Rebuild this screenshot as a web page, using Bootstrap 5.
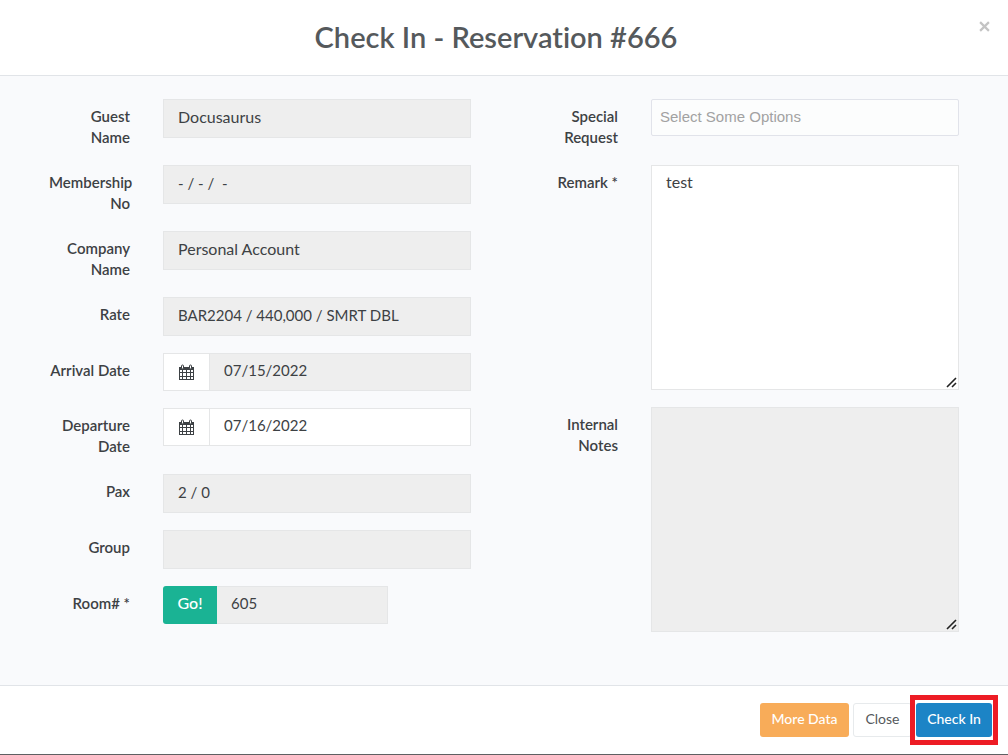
<!DOCTYPE html>
<html lang="en">
<head>
<meta charset="utf-8">
<meta name="viewport" content="width=device-width, initial-scale=1">
<title>Check In - Reservation #666</title>
<link href="https://cdn.jsdelivr.net/npm/bootstrap@5.3.0/dist/css/bootstrap.min.css" rel="stylesheet">
<style>
  body { font-family: Lato, "Liberation Sans", sans-serif; font-variant-ligatures: none; color: #3d4144; background: #fff; }
  .dialog { border-bottom: 1px solid #5f6062; }
  .dialog-head { height: 76px; padding: 0 32px 2px 16px; border-bottom: 1px solid #e1e4e8; }
  .dialog-head h1 { font-size: 29px; line-height: 36px; font-weight: 600; color: #55595c; }
  .dismiss { top: 14px; right: 16px; width: 15px; height: 24px; color: #c4c4c4; line-height: 1; }
  .dialog-main { background: #f9fafc; padding: 23px 16px 36px; }
  .field { display: grid; grid-template-columns: 81px minmax(0, 1fr); column-gap: 33px; padding: 0 33px; margin-bottom: 17px; }
  .field > label { padding-top: 7px; font-size: 15px; line-height: 21px; font-weight: 600; text-align: right; }
  .form-control, .input-group-text { border: 1px solid #e5e6e7; border-radius: 0; }
  .form-control { height: 39px; padding: 3px 14px 7px; font-size: 16px; line-height: 24px; color: #3d4144; }
  .input-group .form-control { height: 38px; }
  .form-control.numeric { font-size: 15px; }
  .form-control[readonly] { background: #eee; }
  .input-group-text { width: 47px; background: #fff; color: #3d4144; }
  .room-group { width: 225px; }
  .btn-go { width: 54px; padding: 0 0 4px; border: 0; border-radius: 3px 0 0 3px; background: #1ab394; color: #fff; font-size: 16px; font-weight: 500; }
  input.options { height: 37px; padding: 5px 8px 7px; font: 15px "Liberation Sans", sans-serif; border-color: #e1e3ea; border-radius: 2px; background: #fcfdfd; }
  input.options::placeholder { color: #a2a2a2; opacity: 1; }
  textarea.form-control { height: 225px; font-size: 16px; padding-top: 4px; resize: none; }
  .grip { right: 0; bottom: 1px; pointer-events: none; }
  .dialog-foot { padding: 17px 16px; border-top: 1px solid #e1e4e8; gap: 4px; }
  .dialog-foot .btn { height: 34px; padding: 0 0 2px; font-size: 14px; line-height: 20px; border-radius: 3px; border: 1px solid transparent; white-space: nowrap; }
  .dialog-foot .btn-more { width: 89px; background: #f8ac59; color: #fff; font-weight: 500; }
  .dialog-foot .btn-close-text { width: 59px; background: #fff; border-color: #e7eaec; color: #55595c; }
  .dialog-foot .btn-checkin { width: 76px; background: #1c84c6; color: #fff; font-weight: 500; }
  .highlight::after { content: ""; position: absolute; inset: -8px -6px; border: 5px solid #ed1c24; pointer-events: none; }
</style>
</head>
<body>
<svg class="d-none" aria-hidden="true">
  <symbol id="calendar" viewBox="0 0 16 17">
    <path fill="currentColor" fill-rule="evenodd" d="M0 3h15v13H0zM1 6v2h2V6zm3 0v2h3V6zm4 0v2h3V6zm4 0v2h2V6zM1 9v3h2V9zm3 0v3h3V9zm4 0v3h3V9zm4 0v3h2V9zM1 13v2h2v-2zm3 0v2h3v-2zm4 0v2h3v-2zm4 0v2h2v-2z"/>
    <rect x="2.5" y="1" width="2" height="4" rx="1" fill="#fff" stroke="currentColor"/>
    <rect x="10.5" y="1" width="2" height="4" rx="1" fill="#fff" stroke="currentColor"/>
  </symbol>
  <symbol id="grip" viewBox="0 0 14 14">
    <path d="M2 12L11 3M7 12l4-4" stroke="#222" stroke-width="1.6" fill="none"/>
  </symbol>
</svg>
<form class="dialog d-flex flex-column min-vh-100">
  <header class="dialog-head position-relative d-flex align-items-center justify-content-center flex-shrink-0">
    <h1 class="m-0">Check In - Reservation #666</h1>
    <button type="button" class="dismiss position-absolute btn p-0 border-0 d-flex align-items-center justify-content-center" aria-label="Close dialog">
      <svg width="11" height="11" viewBox="0 0 10 10"><path d="M1 1l8 8M9 1L1 9" stroke="currentColor" stroke-width="2"/></svg>
    </button>
  </header>
  <main class="dialog-main flex-grow-1">
    <div class="row g-0">
      <div class="col-6">
        <div class="field"><label for="guest">Guest Name</label><input id="guest" class="form-control" readonly value="Docusaurus"></div>
        <div class="field"><label for="member">Membership No</label><input id="member" class="form-control numeric" readonly value="- / - /  -"></div>
        <div class="field"><label for="company">Company Name</label><input id="company" class="form-control" readonly value="Personal Account"></div>
        <div class="field"><label for="rate">Rate</label><input id="rate" class="form-control numeric" readonly value="BAR2204 / 440,000 / SMRT DBL"></div>
        <div class="field"><label for="arrival">Arrival Date</label>
          <div class="input-group"><span class="input-group-text p-0 justify-content-center"><svg width="16" height="17"><use href="#calendar"/></svg></span><input id="arrival" class="form-control numeric" readonly value="07/15/2022"></div>
        </div>
        <div class="field"><label for="departure">Departure Date</label>
          <div class="input-group align-self-start"><span class="input-group-text p-0 justify-content-center"><svg width="16" height="17"><use href="#calendar"/></svg></span><input id="departure" class="form-control numeric" value="07/16/2022"></div>
        </div>
        <div class="field"><label for="pax">Pax</label><input id="pax" class="form-control numeric" readonly value="2 / 0"></div>
        <div class="field"><label for="group">Group</label><input id="group" class="form-control" readonly></div>
        <div class="field"><label for="room">Room# *</label>
          <div class="input-group room-group"><button type="button" class="btn btn-go">Go!</button><input id="room" class="form-control numeric" readonly value="605"></div>
        </div>
      </div>
      <div class="col-6">
        <div class="field"><label for="special">Special Request</label><input id="special" class="form-control options" placeholder="Select Some Options"></div>
        <div class="field"><label for="remark">Remark *</label>
          <div class="position-relative"><textarea id="remark" class="form-control">test</textarea><svg class="grip position-absolute" width="14" height="14"><use href="#grip"/></svg></div>
        </div>
        <div class="field"><label for="notes">Internal Notes</label>
          <div class="position-relative"><textarea id="notes" class="form-control" readonly></textarea><svg class="grip position-absolute" width="14" height="14"><use href="#grip"/></svg></div>
        </div>
      </div>
    </div>
  </main>
  <footer class="dialog-foot d-flex justify-content-end">
    <button type="button" class="btn btn-more">More Data</button>
    <button type="button" class="btn btn-close-text">Close</button>
    <div class="highlight position-relative"><button type="submit" class="btn btn-checkin">Check In</button></div>
  </footer>
</form>
<script src="https://cdn.jsdelivr.net/npm/bootstrap@5.3.0/dist/js/bootstrap.bundle.min.js"></script>
</body>
</html>
